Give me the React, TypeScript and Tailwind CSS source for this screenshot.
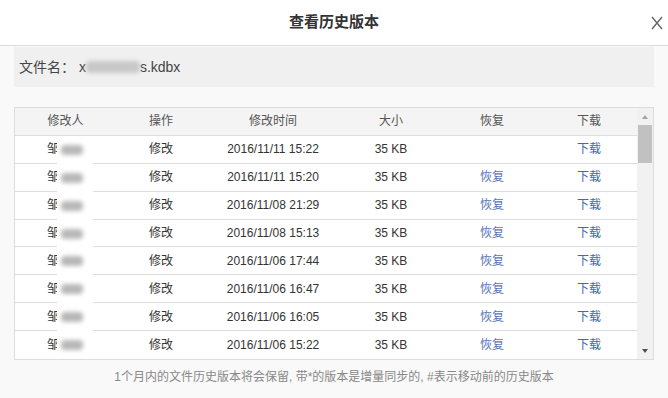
import React from "react";

const rows = [
  { t: "2016/11/11 15:22", r: false },
  { t: "2016/11/11 15:20", r: true },
  { t: "2016/11/08 21:29", r: true },
  { t: "2016/11/08 15:13", r: true },
  { t: "2016/11/06 17:44", r: true },
  { t: "2016/11/06 16:47", r: true },
  { t: "2016/11/06 16:05", r: true },
  { t: "2016/11/06 15:22", r: true },
];

const font = { fontFamily: '"Liberation Sans", Arial, "Noto Sans CJK SC", sans-serif' };

export default function App() {
  return (
    <div className="w-[668px] h-[398px] bg-[#f9f9f9] flex flex-col" style={font}>
      <div className="h-[46px] bg-white border-b border-[#dcdcdc] flex items-center justify-center relative shrink-0">
        <span className="text-[15px] font-bold text-[#333]">查看历史版本</span>
        <svg className="absolute left-[651px] top-[16px]" width="12" height="14" viewBox="0 0 12 14">
          <path d="M1 1 L11 13 M11 1 L1 13" stroke="#666" strokeWidth="1.4" fill="none" />
        </svg>
      </div>
      <div className="mx-[14px] mt-[1px] h-[40px] bg-[#f0f0f0] flex items-center pl-[5px] text-[14px] text-[#444]">
        <span>文件名：&nbsp;x</span>
        <span className="inline-block w-[54px] h-[16px] relative">
          <span className="absolute inset-[2px_0px] bg-[#c8c8c8] blur-[2px] rounded"></span>
        </span>
        <span>s.kdbx</span>
      </div>
      <div className="mx-[14px] mt-[20px] h-[253px] border border-[#dcdcdc] bg-white flex relative">
        <div className="flex-1 flex flex-col text-[12px]">
          <div className="h-[28px] bg-[#f4f4f4] border-b border-[#dcdcdc] grid grid-cols-[101px_90px_134px_102px_100px_94px] items-center text-center text-[#555]">
            <span>修改人</span>
            <span>操作</span>
            <span>修改时间</span>
            <span>大小</span>
            <span>恢复</span>
            <span>下载</span>
          </div>
          {rows.map((row, i) => (
            <div
              key={i}
              className={`h-[28px] grid grid-cols-[101px_90px_134px_102px_100px_94px] items-center text-center text-[#333] ${i < rows.length - 1 ? "border-b border-[#dcdcdc]" : ""}`}
            >
              <span className="text-left pl-[32px]">邹</span>
              <span>修改</span>
              <span>{row.t}</span>
              <span>35 KB</span>
              <span className="text-[#5577b8]">{row.r ? "恢复" : ""}</span>
              <span className="text-[#3a6bb5]">下载</span>
            </div>
          ))}
        </div>
        <div className="absolute left-[42px] top-[28px] bottom-0 w-[36px] bg-white flex flex-col">
          {rows.map((_, i) => (
            <div key={i} className="h-[28px] flex items-center pl-[4px]">
              <span className="w-[22px] h-[10px] bg-[#b8b8b8] blur-[2px] rounded-sm"></span>
            </div>
          ))}
        </div>
        <div className="w-[16px] bg-[#f1f1f1] flex flex-col items-center">
          <div className="h-[17px] flex items-center justify-center">
            <span className="w-0 h-0 border-l-[3px] border-r-[3px] border-b-[4px] border-l-transparent border-r-transparent border-b-[#a3a3a3]"></span>
          </div>
          <div className="w-[14px] h-[38px] bg-[#c1c1c1]"></div>
          <div className="flex-1"></div>
          <div className="h-[17px] flex items-center justify-center">
            <span className="w-0 h-0 border-l-[3px] border-r-[3px] border-t-[4px] border-l-transparent border-r-transparent border-t-[#505050]"></span>
          </div>
        </div>
      </div>
      <div className="text-center text-[12px] text-[#888] mt-[8px]">
        1个月内的文件历史版本将会保留, 带*的版本是增量同步的, #表示移动前的历史版本
      </div>
    </div>
  );
}
